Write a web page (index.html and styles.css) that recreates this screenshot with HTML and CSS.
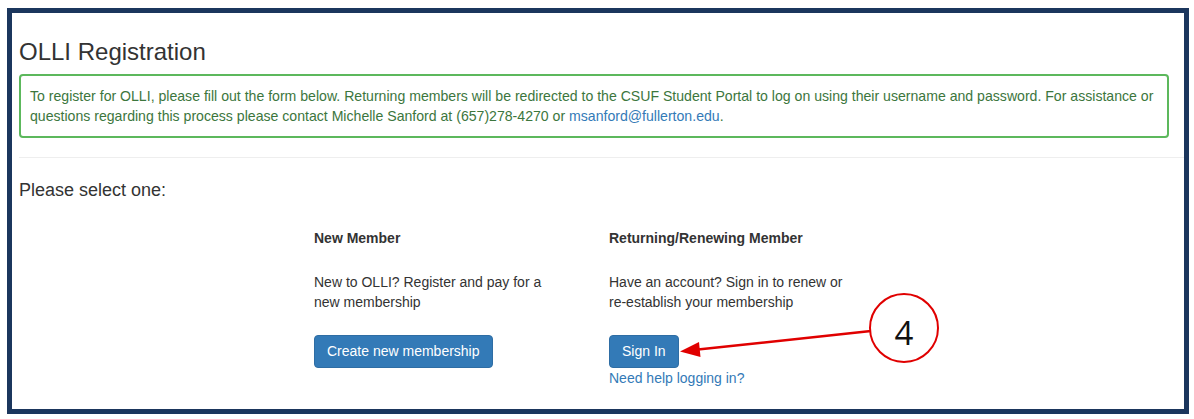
FILE: index.html
```html
<!DOCTYPE html>
<html>
<head>
    <meta charset="UTF-8">
    <title>OLLI Registration</title>
    <link rel="stylesheet" href="styles.css">
</head>
<body>
    <div class="frame">
        <div class="page">
            <h3 class="title">OLLI Registration</h3>
            <div class="notice">
                To register for OLLI, please fill out the form below. Returning members will be redirected to the CSUF Student Portal to log on using their username and password. For assistance or questions regarding this process please contact Michelle Sanford at (657)278-4270 or <a href="#">msanford@fullerton.edu</a>.
            </div>
            <hr>
            <h4 class="prompt">Please select one:</h4>

            <div class="choices">
                <div class="choice">
                    <p class="choice-title">New Member</p>
                    <p class="choice-text">New to OLLI? Register and pay for a new membership</p>
                    <a class="btn" href="#">Create new membership</a>
                </div>
                <div class="choice">
                    <p class="choice-title">Returning/Renewing Member</p>
                    <p class="choice-text">Have an account? Sign in to renew or re-establish your membership</p>
                    <a class="btn" href="#">Sign In</a>
                    <a class="help" href="#">Need help logging in?</a>
                </div>
            </div>
        </div>
    </div>

    <!-- step callout drawn over the screenshot -->
    <svg class="callout" viewBox="0 0 1194 419" width="1194" height="419">
        <line x1="871" y1="331" x2="698" y2="349.5" stroke="#e00000" stroke-width="2.5"/>
        <polygon points="680,351.5 699,342 700.5,357" fill="#e00000"/>
        <circle cx="904" cy="328" r="34" fill="#fff" stroke="#e00000" stroke-width="2"/>
        <text x="904" y="345" text-anchor="middle" class="step">4</text>
    </svg>
</body>
</html>
```

FILE: styles.css
```css
body {
    margin: 0;
    font-family: "Liberation Sans", Arial, sans-serif;
    font-size: 14px;
    line-height: 20px;
    color: #333;
    background-color: #fff;
    position: relative;
    width: 1194px;
    height: 419px;
    overflow: hidden;
}

.frame {
    margin: 8px 0 0 7px;
    width: 1182px;
    height: 406px;
    border: 5px solid #1b365d;
    box-sizing: border-box;
    overflow: hidden;
}

.page {
    padding: 26px 0 0 7px;
}

.title {
    margin: 0 0 9px 0;
    font-size: 24px;
    font-weight: normal;
    line-height: 26px;
}

.notice {
    margin-right: 15px;
    padding: 10px 9px;
    border: 2px solid #5cb85c;
    border-radius: 4px;
    color: #3c763d;
    font-size: 14.1px;
    line-height: 20px;
}

.notice a {
    color: #337ab7;
    text-decoration: none;
}

hr {
    margin: 19px 0 0 0;
    border: 0;
    border-top: 1px solid #eee;
}

.prompt {
    margin: 22px 0 0 0;
    font-size: 18px;
    font-weight: normal;
    line-height: 20px;
}

.choices {
    display: grid;
    grid-template-columns: 295px 295px;
    margin: 28px 0 0 295px;
}

.choice p {
    margin: 0;
}

.choice-title {
    font-weight: bold;
}

.choice-text {
    width: 240px;
    margin-top: 24px !important;
}

.btn {
    display: inline-block;
    margin-top: 23px;
    padding: 6px 12px;
    line-height: 19px;
    font-size: 14px;
    color: #fff;
    background-color: #337ab7;
    border: 1px solid #2e6da4;
    border-radius: 4px;
    text-decoration: none;
}

.help {
    display: block;
    color: #337ab7;
    text-decoration: none;
}

.callout {
    position: absolute;
    top: 0;
    left: 0;
    pointer-events: none;
}

.step {
    font-family: "Open Sans", "Liberation Sans", sans-serif;
    font-size: 33px;
    fill: #111;
}
```
